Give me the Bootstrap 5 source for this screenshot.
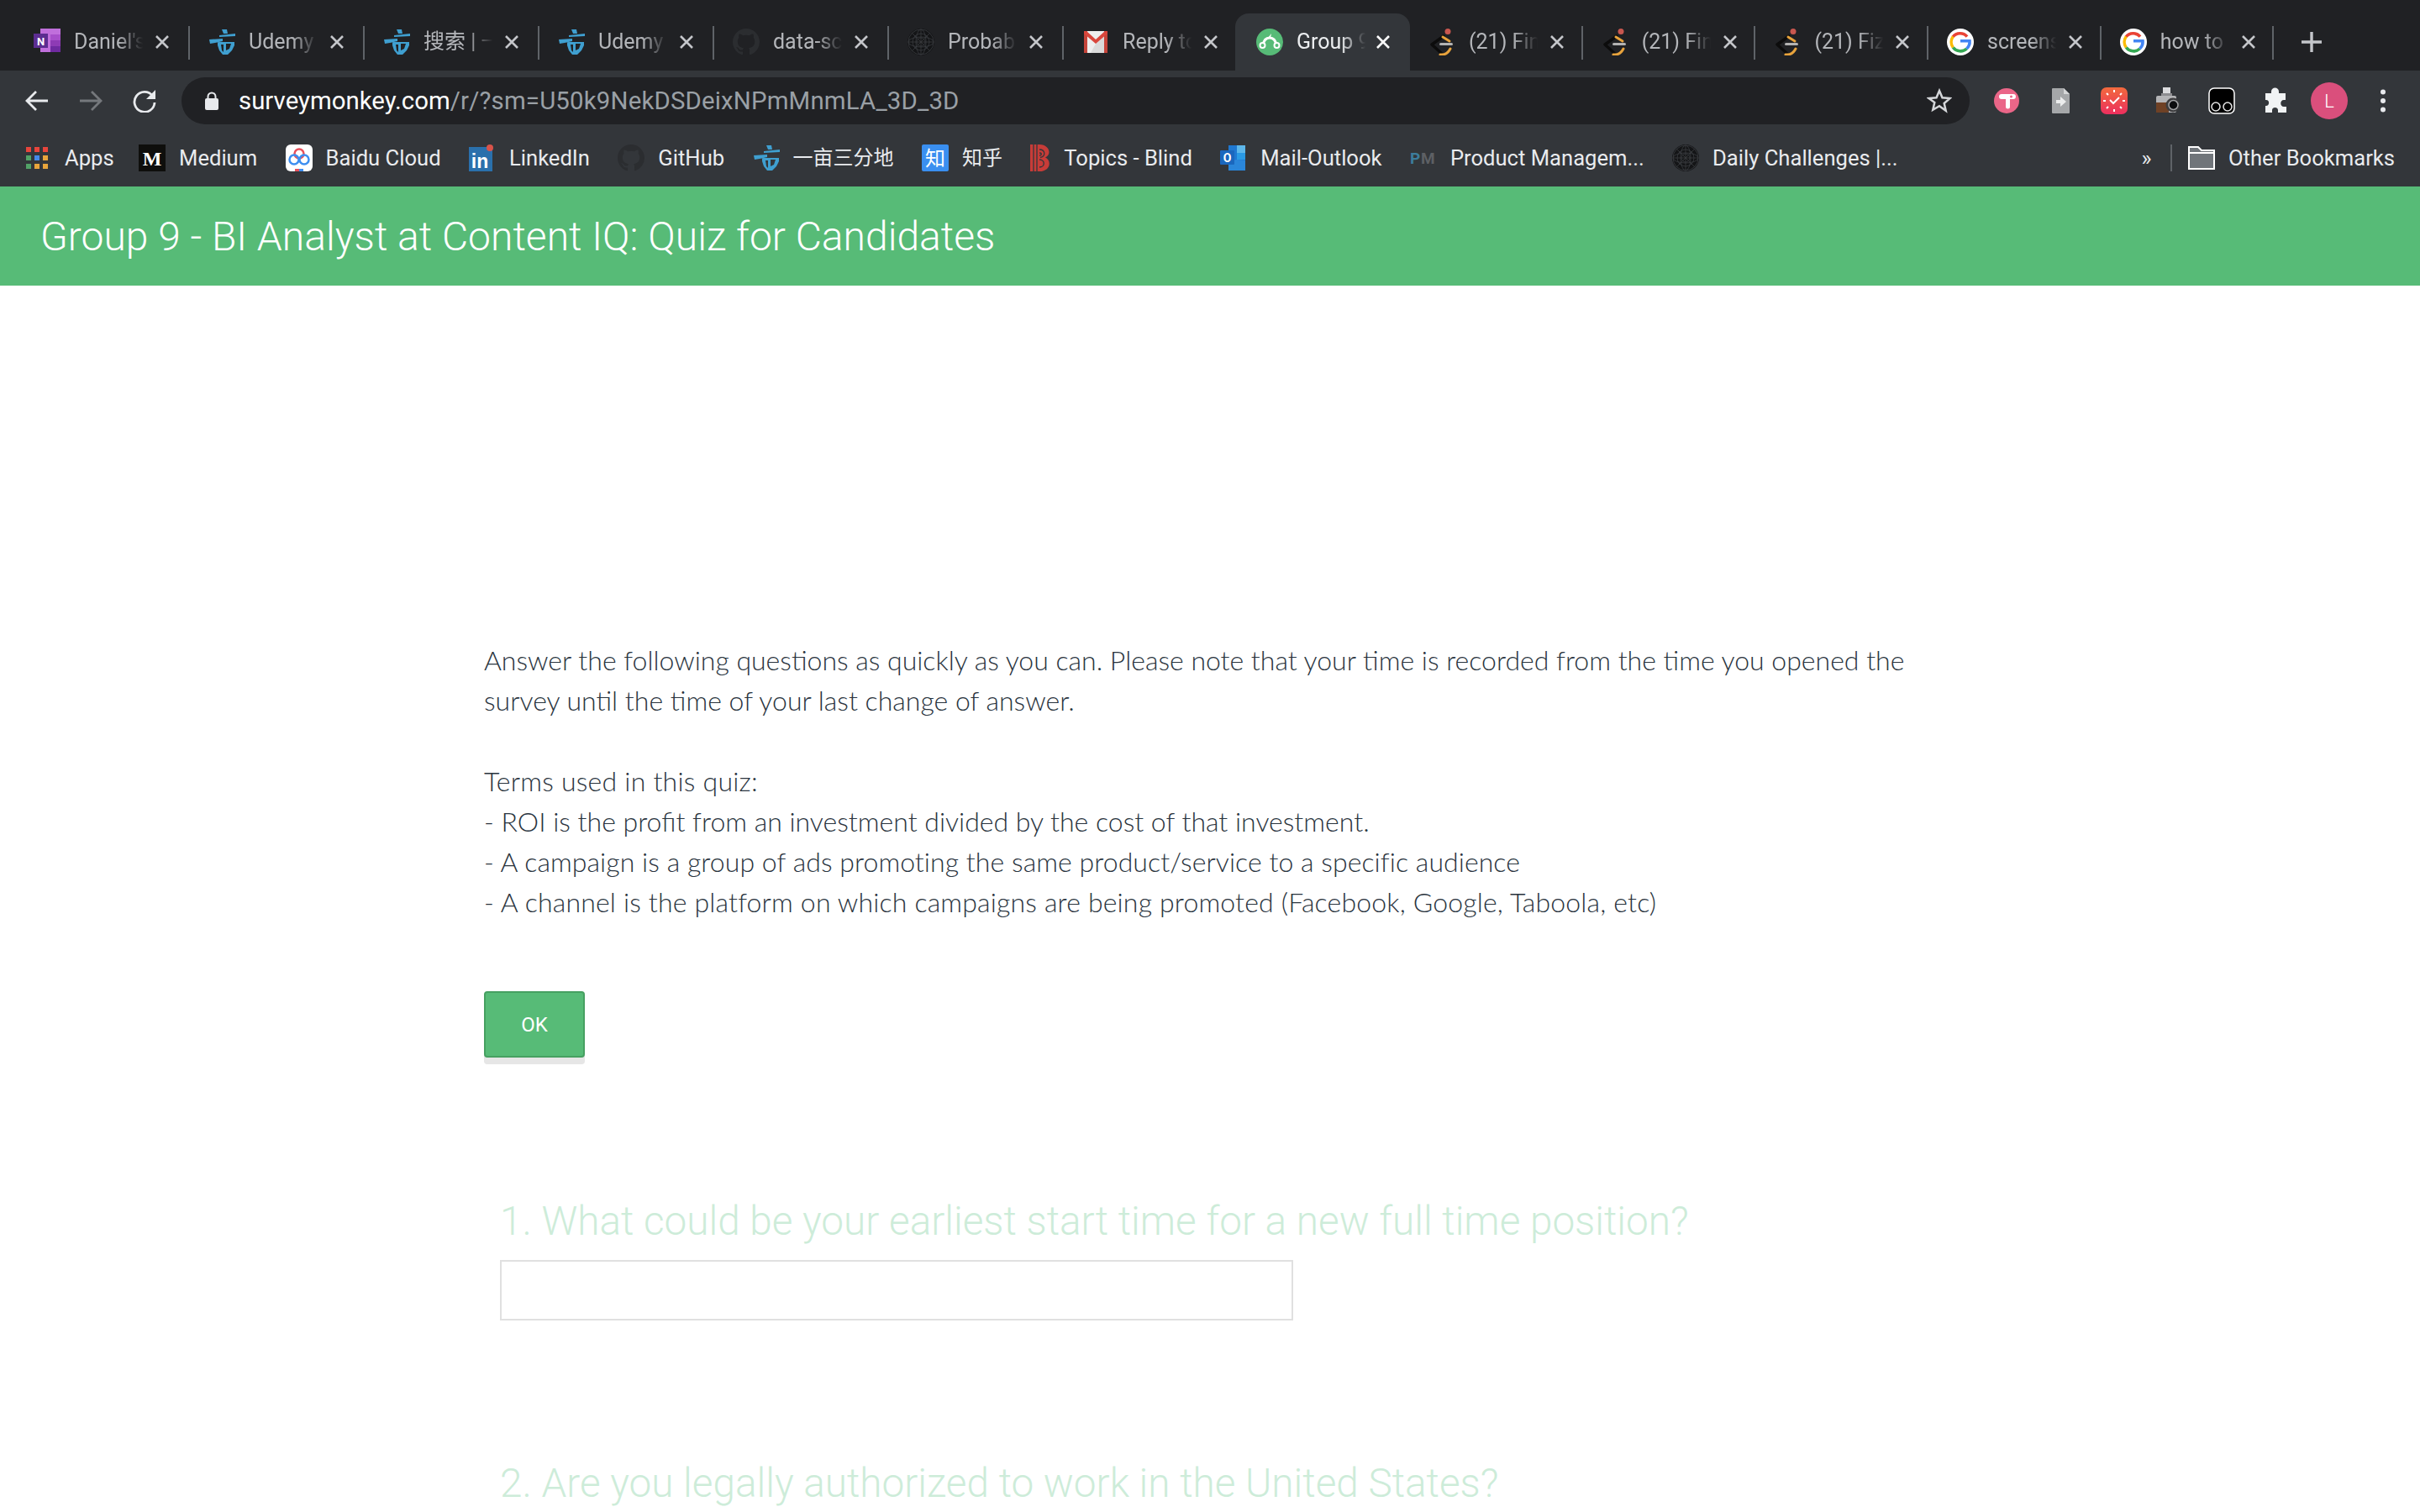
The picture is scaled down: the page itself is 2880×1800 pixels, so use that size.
<!DOCTYPE html>
<html lang="en">
<head>
<meta charset="UTF-8">
<title>Group 9 - BI Analyst at Content IQ: Quiz for Candidates</title>
<link rel="stylesheet" href="https://cdn.jsdelivr.net/npm/bootstrap@5.3.0/dist/css/bootstrap.min.css">
<style>
    body { background: #fff; height: 1800px; overflow: hidden; font-family: Roboto, "Noto Sans CJK SC", sans-serif; }
    /* browser chrome */
    .tabstrip { height: 84px; background: #202124; padding: 16px 0 0 18px; }
    .tabitem { width: 208px; height: 68px; padding-left: 22px; position: relative; color: #b4b6ba; font-size: 25px; }
    .tabitem:nth-child(n+8) { width: 205.7px; }
    .tabitem::after { content: ""; position: absolute; right: 0; top: 15px; height: 40px; width: 2px; background: #5f6368; }
    .tabitem.tab-on { background: #33363a; color: #eceef0; border-radius: 16px 16px 0 0; width: 208px; margin-left: -4px; padding-left: 25px; }
    .tabitem.tab-on::after { display: none; }
    .tabitem.tab-on .tab-x { color: #fff; margin-left: 10px; }
    .tabitem.before-on::after { display: none; }
    .fav { width: 32px; height: 32px; flex: none; }
    .tab-name { width: 84px; margin-left: 16px; white-space: nowrap; overflow: hidden; -webkit-mask-image: linear-gradient(90deg, #000 62%, transparent 98%); mask-image: linear-gradient(90deg, #000 62%, transparent 98%); }
    .tab-x { width: 18px; height: 18px; margin-left: 12px; color: #c4c6ca; flex: none; }
    .tab-plus { margin-left: 32px; width: 26px; height: 26px; color: #c4c6ca; }
    .toolbar { height: 70px; background: #33363a; padding: 8px 12px 6px 12px; }
    .tool { width: 64px; height: 56px; flex: none; color: #e8eaed; }
    .tool.off { color: #75787c; }
    .omni { background: #202124; border-radius: 28px; height: 56px; padding-left: 28px; margin: 0 12px 0 12px; }
    .url { font-size: 29.4px; color: #fff; margin-left: 24px; }
    .url span { color: #9aa0a6; letter-spacing: .17px; }
    .star-i { margin-right: 21px; }
    .avatar-l { width: 44px; height: 44px; border-radius: 50%; background: #da4f7c; color: #fff; font-size: 22px; font-weight: 300; }
    .bookbar { height: 68px; background: #33363a; padding: 0 30px 0 31px; gap: 33.4px; color: #e9ebee; font-size: 25.6px; }
    .bookmark-i { gap: 16px; white-space: nowrap; }
    .bookmark-first { margin-right: -4px; }
    .bookmark-end { margin-left: auto; gap: 22px; }
    .bookmark-last { margin-left: -14px; }
    .cjk-txt { font-size: 24px; }
    .vsep { width: 2px; height: 32px; background: #5f6368; }
    .fav-apps { width: 26px; margin-right: 4px; }
    .fav-blind { width: 24px; }
    /* survey */
    .survey-head { height: 118px; background: #57bb77; color: #fff; font-family: Roboto, sans-serif; font-weight: 300; font-size: 48px; padding: 2px 0 0 48px; }
    .survey-body { padding: 422px 0 0 576px; width: 2304px; }
    .intro-txt { font-family: Lato, sans-serif; font-weight: 300; font-size: 32px; line-height: 48px; color: #2a343e; margin: 0; }
    .ls-a { letter-spacing: .23px; }
    .ls-b { letter-spacing: .06px; }
    .ls-c { letter-spacing: .17px; }
    .ok-btn { width: 120px; height: 79px; margin-top: 82px; background: #57bb77; border: 2px solid #46a061; border-radius: 4px; box-shadow: 0 8px 0 #e6e6e6; color: #fff; font-family: Roboto, sans-serif; font-size: 24px; font-weight: 400; padding: 0; }
    .ok-btn:hover { background: #57bb77; border-color: #46a061; color: #fff; }
    .qblock { padding-left: 19px; }
    .qtitle { font-family: Roboto, sans-serif; font-weight: 300; font-size: 47.7px; line-height: 64px; color: #cdecd9; margin: 0; white-space: nowrap; }
    .q-one { margin-top: 163px; }
    .q-two { margin-top: 162px; }
    .qinput { width: 944px; height: 72px; border: 2px solid #e0e0e0; background: #fff; margin-top: 14px; border-radius: 0; }
</style>
</head>
<body>

<svg width="0" height="0" class="position-absolute">
    <defs>
        <symbol id="acres" viewBox="0 0 32 32">
            <path fill="#3f9fd0" fill-rule="evenodd" d="M16 1h6l1 5h-5zM13 8l19-2v3l-19 1zM1 13l16-1v3l-9 2-6 1zM11 16h20v4l-3 6-5 5h-6l-4-5-2-6zM15 19l1 7 2 2v-9zM21 18v8l4-2 2-6z"/>
        </symbol>
        <symbol id="octo" viewBox="0 0 16 16">
            <path fill="#2b2d30" d="M8 0C3.58 0 0 3.58 0 8c0 3.54 2.29 6.53 5.47 7.59.4.07.55-.17.55-.38 0-.19-.01-.82-.01-1.49-2.01.37-2.53-.49-2.69-.94-.09-.23-.48-.94-.82-1.13-.28-.15-.68-.52-.01-.53.63-.01 1.08.58 1.23.82.72 1.21 1.87.87 2.33.66.07-.52.28-.87.51-1.07-1.78-.2-3.64-.89-3.64-3.95 0-.87.31-1.59.82-2.15-.08-.2-.36-1.02.08-2.12 0 0 .67-.21 2.2.82.64-.18 1.32-.27 2-.27s1.36.09 2 .27c1.53-1.04 2.2-.82 2.2-.82.44 1.1.16 1.92.08 2.12.51.56.82 1.27.82 2.15 0 3.07-1.87 3.75-3.65 3.95.29.25.54.73.54 1.48 0 1.07-.01 1.93-.01 2.2 0 .21.15.46.55.38A8.01 8.01 0 0 0 16 8c0-4.42-3.58-8-8-8z"/>
        </symbol>
        <symbol id="orb" viewBox="0 0 32 32">
            <circle cx="16" cy="16" r="16" fill="#141517"/>
            <g fill="none" stroke="#3a3c40" stroke-width=".8">
                <circle cx="16" cy="16" r="15"/><circle cx="16" cy="16" r="10"/><circle cx="16" cy="16" r="5"/>
                <ellipse cx="16" cy="16" rx="15" ry="6"/><ellipse cx="16" cy="16" rx="6" ry="15"/>
                <path d="M1 16h30M16 1v30M5 5l22 22M27 5L5 27"/>
            </g>
        </symbol>
        <symbol id="fish" viewBox="0 0 32 32">
            <path d="M18 9L4 19l12 11" fill="none" stroke="#0c0c0c" stroke-width="3.400" stroke-linecap="round" stroke-linejoin="round"/>
            <path d="M17 10l8 5" fill="none" stroke="#e8a33c" stroke-width="3" stroke-linecap="round"/>
            <path d="M14 31q8 1 12-7" fill="none" stroke="#e8a33c" stroke-width="3" stroke-linecap="round"/>
            <rect x="13" y="17" width="16" height="3" rx="1.500" fill="#b3b3b3"/>
            <circle cx="23" cy="3.500" r="3.500" fill="#c8574f"/>
        </symbol>
        <symbol id="gg" viewBox="0 0 32 32">
            <circle cx="16" cy="16" r="16" fill="#fff"/>
            <path fill="none" stroke="#ea4335" stroke-width="3.6" d="M24 9.6A11 11 0 0 0 7 10"/>
            <path fill="none" stroke="#fbbc05" stroke-width="3.6" d="M7.3 9.5a11 11 0 0 0 0 13"/>
            <path fill="none" stroke="#34a853" stroke-width="3.6" d="M7.3 22.5A11 11 0 0 0 23.5 24"/>
            <path fill="none" stroke="#4285f4" stroke-width="3.6" d="M23.5 24A11 11 0 0 0 27 14.7H16"/>
        </symbol>
        <symbol id="cross" viewBox="0 0 18 18">
            <path d="M2 2l14 14M16 2L2 16" stroke="currentColor" stroke-width="2.6" fill="none"/>
        </symbol>
    </defs>
</svg>

<div class="tabstrip d-flex align-items-center">
    <div class="tabitem d-flex align-items-center">
        <svg class="fav" viewBox="0 0 32 32"><rect x="8" width="24" height="28" fill="#c06fdc"/><rect x="20" y="7" width="12" height="7" fill="#a74fca"/><rect x="20" y="14" width="12" height="7" fill="#8e3bb5"/><rect x="20" y="21" width="12" height="7" fill="#6f2aa0"/><rect y="6" width="17" height="17" fill="#5c2d91"/><text x="8.5" y="20" text-anchor="middle" font-size="13" font-weight="700" fill="#fff" font-family="Roboto">N</text></svg>
        <div class="tab-name">Daniel's</div>
        <svg class="tab-x"><use href="#cross"/></svg>
    </div>
    <div class="tabitem d-flex align-items-center"><svg class="fav"><use href="#acres"/></svg><div class="tab-name">Udemy</div><svg class="tab-x"><use href="#cross"/></svg></div>
    <div class="tabitem d-flex align-items-center"><svg class="fav"><use href="#acres"/></svg><div class="tab-name">搜索 | 一亩</div><svg class="tab-x"><use href="#cross"/></svg></div>
    <div class="tabitem d-flex align-items-center"><svg class="fav"><use href="#acres"/></svg><div class="tab-name">Udemy</div><svg class="tab-x"><use href="#cross"/></svg></div>
    <div class="tabitem d-flex align-items-center"><svg class="fav"><use href="#octo"/></svg><div class="tab-name">data-sci</div><svg class="tab-x"><use href="#cross"/></svg></div>
    <div class="tabitem d-flex align-items-center"><svg class="fav"><use href="#orb"/></svg><div class="tab-name">Probabil</div><svg class="tab-x"><use href="#cross"/></svg></div>
    <div class="tabitem before-on d-flex align-items-center">
        <svg class="fav" viewBox="0 0 32 32"><rect x="2" y="3" width="28" height="26" fill="#eee"/><path fill="#dadada" d="M16 18L30 6v23H10z"/><path fill="#c5443a" d="M2 3h4v26H2zM26 3h4v26h-4z"/><path fill="#d9463c" d="M2 3h3l11 10L27 3h3v3L16 18 2 6z"/></svg>
        <div class="tab-name">Reply to</div>
        <svg class="tab-x"><use href="#cross"/></svg>
    </div>
    <div class="tabitem tab-on d-flex align-items-center">
        <svg class="fav" viewBox="0 0 32 32"><circle cx="16" cy="16" r="16" fill="#57bb77"/><path d="M8 20c1-7 4-9 8-9s7 2 8 9" fill="none" stroke="#fff" stroke-width="3"/><path d="M14 11l4-5-1 5z" fill="#fff"/><circle cx="7.500" cy="20" r="3" fill="#57bb77" stroke="#fff" stroke-width="2"/><circle cx="24.500" cy="20" r="3" fill="#57bb77" stroke="#fff" stroke-width="2"/></svg>
        <div class="tab-name">Group 9</div>
        <svg class="tab-x"><use href="#cross"/></svg>
    </div>
    <div class="tabitem d-flex align-items-center"><svg class="fav"><use href="#fish"/></svg><div class="tab-name">(21) Find</div><svg class="tab-x"><use href="#cross"/></svg></div>
    <div class="tabitem d-flex align-items-center"><svg class="fav"><use href="#fish"/></svg><div class="tab-name">(21) Find</div><svg class="tab-x"><use href="#cross"/></svg></div>
    <div class="tabitem d-flex align-items-center"><svg class="fav"><use href="#fish"/></svg><div class="tab-name">(21) Fiz</div><svg class="tab-x"><use href="#cross"/></svg></div>
    <div class="tabitem d-flex align-items-center"><svg class="fav"><use href="#gg"/></svg><div class="tab-name">screensh</div><svg class="tab-x"><use href="#cross"/></svg></div>
    <div class="tabitem d-flex align-items-center"><svg class="fav"><use href="#gg"/></svg><div class="tab-name">how to</div><svg class="tab-x"><use href="#cross"/></svg></div>
    <svg class="tab-plus" viewBox="0 0 26 26"><path d="M13 1v24M1 13h24" stroke="currentColor" stroke-width="3.4"/></svg>
</div>

<div class="toolbar d-flex align-items-center">
    <div class="tool d-flex align-items-center justify-content-center"><svg width="28" height="26" viewBox="0 0 28 26"><path d="M27 13H3M13 2L2 13l11 11" fill="none" stroke="currentColor" stroke-width="2.800"/></svg></div>
    <div class="tool off d-flex align-items-center justify-content-center"><svg width="28" height="26" viewBox="0 0 28 26"><path d="M1 13h24M15 2l11 11-11 11" fill="none" stroke="currentColor" stroke-width="2.800"/></svg></div>
    <div class="tool d-flex align-items-center justify-content-center"><svg width="28" height="28" viewBox="0 0 28 28"><path d="M23.500 8A12 12 0 1 0 26 16" fill="none" stroke="currentColor" stroke-width="2.800"/><path d="M27 1v11H16z" fill="currentColor"/></svg></div>
    <div class="omni flex-grow-1 d-flex align-items-center">
        <svg width="16" height="22" viewBox="0 0 16 22"><path d="M3.500 9V6a4.500 4.500 0 0 1 9 0v3" fill="none" stroke="#e8eaed" stroke-width="2"/><rect y="8" width="16" height="14" rx="2" fill="#e8eaed"/></svg>
        <div class="url flex-grow-1">surveymonkey.com<span>/r/?sm=U50k9NekDSDeixNPmMnmLA_3D_3D</span></div>
        <svg class="star-i" width="30" height="30" viewBox="0 0 30 30"><path d="M15 3l3.500 8.300 9 .8-6.800 5.900 2 8.800L15 21.200 7.300 25.800l2-8.800L2.500 12.100l9-.8z" fill="none" stroke="#d5d7da" stroke-width="2.500"/></svg>
    </div>
    <div class="tool d-flex align-items-center justify-content-center">
        <svg width="30" height="30" viewBox="0 0 30 30"><circle cx="15" cy="15" r="15" fill="#ea6688"/><path d="M9 7h14a3 3 0 0 1 0 6h-4v9a2.500 2.500 0 0 1-5 0v-9H9a3 3 0 0 1 0-6z" fill="#fff"/><circle cx="20.500" cy="10" r="1.500" fill="#ea6688"/></svg>
    </div>
    <div class="tool d-flex align-items-center justify-content-center">
        <svg width="21" height="30" viewBox="0 0 21 30"><path d="M0 1a1 1 0 0 1 1-1h13l7 7v22a1 1 0 0 1-1 1H1a1 1 0 0 1-1-1z" fill="#a5a7a9"/><path d="M14 0l7 7h-7z" fill="#d6d7d8"/><path d="M5 14h5v-4l7 6-7 6v-4H5z" fill="#eceded"/></svg>
    </div>
    <div class="tool d-flex align-items-center justify-content-center">
        <svg width="32" height="32" viewBox="0 0 32 32"><defs><linearGradient id="clk" x1="0" y1="0" x2="0" y2="1"><stop offset="0" stop-color="#f26a3d"/><stop offset="1" stop-color="#ec2f5e"/></linearGradient></defs><rect width="32" height="32" rx="7" fill="url(#clk)"/><path d="M16 3v3M16 26v3M3 16h3M26 16h3M7 7l2 2M25 7l-2 2M7 25l2-2M25 25l-2-2" stroke="#fff" stroke-width="2"/><path d="M11 15l4 4 7-7" fill="none" stroke="#fff" stroke-width="2"/></svg>
    </div>
    <div class="tool d-flex align-items-center justify-content-center">
        <svg width="30" height="32" viewBox="0 0 30 32"><path d="M9 0h9v7H9z" fill="#dcdcde"/><path d="M7 7h13v4H7z" fill="#8d8d90"/><rect x="1" y="10" width="24" height="20" rx="2" fill="#b4b4b6"/><rect x="1" y="18" width="15" height="12" fill="#6f4125"/><circle cx="21" cy="21" r="8.500" fill="#3c3c3e"/><circle cx="21.500" cy="21" r="5.500" fill="#0d0d0f" stroke="#a3a3a5" stroke-width="1.500"/></svg>
    </div>
    <div class="tool d-flex align-items-center justify-content-center">
        <svg width="32" height="32" viewBox="0 0 32 32"><rect x="1" y="1" width="30" height="30" rx="6" fill="#000" stroke="#fff" stroke-width="1.500"/><circle cx="9" cy="23" r="5" fill="none" stroke="#e8e8e8" stroke-width="1.500"/><circle cx="23" cy="23" r="5" fill="none" stroke="#e8e8e8" stroke-width="1.500"/></svg>
    </div>
    <div class="tool d-flex align-items-center justify-content-center">
        <svg width="30" height="32" viewBox="0 0 30 32"><path d="M10 5c0-6 9-6 9 0v2h8v8h-2c-5 0-5 8 0 8h3v7H18v-3c0-4-7-4-7 0v3H3v-8c5 1 6-8 0-7V7h7z" fill="#f1f3f4"/></svg>
    </div>
    <div class="tool d-flex align-items-center justify-content-center">
        <div class="avatar-l d-flex align-items-center justify-content-center">L</div>
    </div>
    <div class="tool d-flex align-items-center justify-content-center">
        <svg width="8" height="28" viewBox="0 0 8 28"><circle cx="4" cy="3.500" r="3" fill="#e8eaed"/><circle cx="4" cy="14" r="3" fill="#e8eaed"/><circle cx="4" cy="24.500" r="3" fill="#e8eaed"/></svg>
    </div>
</div>

<div class="bookbar d-flex align-items-center">
    <div class="bookmark-i bookmark-first d-flex align-items-center">
        <svg class="fav fav-apps" viewBox="0 0 26 26"><path fill="#e8453c" d="M0 0h6v6H0zM10 0h6v6h-6zM20 0h6v6h-6z"/><path fill="#52a267" d="M0 10h6v6H0z"/><path fill="#4689e8" d="M10 10h6v6h-6z"/><path fill="#e8a53c" d="M20 10h6v6h-6zM10 20h6v6h-6zM20 20h6v6h-6z"/><path fill="#52a267" d="M0 20h6v6H0z"/></svg>
        <span>Apps</span>
    </div>
    <div class="bookmark-i d-flex align-items-center">
        <svg class="fav" viewBox="0 0 32 32"><rect width="32" height="32" fill="#0e0e0c"/><text x="16" y="25" text-anchor="middle" font-size="24" font-weight="700" fill="#fff" font-family="Liberation Serif">M</text></svg>
        <span>Medium</span>
    </div>
    <div class="bookmark-i d-flex align-items-center">
        <svg class="fav" viewBox="0 0 32 32"><rect width="32" height="32" rx="6" fill="#fff"/><circle cx="16" cy="11" r="5.500" fill="none" stroke="#e8505b" stroke-width="2.500"/><circle cx="10" cy="18" r="5.500" fill="none" stroke="#3d8ef0" stroke-width="2.500"/><circle cx="22" cy="18" r="5.500" fill="none" stroke="#3d8ef0" stroke-width="2.500"/><rect x="11" y="29" width="5" height="3" fill="#e8505b"/><rect x="16" y="29" width="5" height="3" fill="#3d8ef0"/></svg>
        <span>Baidu Cloud</span>
    </div>
    <div class="bookmark-i d-flex align-items-center">
        <svg class="fav" viewBox="0 0 32 32"><rect y="3" width="28" height="29" fill="#2a70ac"/><text x="13" y="28" text-anchor="middle" font-size="23" font-weight="700" fill="#fff" font-family="Liberation Sans">in</text><circle cx="25" cy="4" r="4" fill="#d9534a"/></svg>
        <span>LinkedIn</span>
    </div>
    <div class="bookmark-i d-flex align-items-center"><svg class="fav"><use href="#octo"/></svg><span>GitHub</span></div>
    <div class="bookmark-i d-flex align-items-center"><svg class="fav"><use href="#acres"/></svg><span class="cjk-txt">一亩三分地</span></div>
    <div class="bookmark-i d-flex align-items-center">
        <svg class="fav" viewBox="0 0 32 32"><rect width="32" height="32" rx="2" fill="#3a8ff0"/><text x="16" y="25" text-anchor="middle" font-size="24" fill="#fff" font-family="Noto Sans CJK SC">知</text></svg>
        <span class="cjk-txt">知乎</span>
    </div>
    <div class="bookmark-i d-flex align-items-center">
        <svg class="fav fav-blind" viewBox="0 0 24 32"><path fill="#c73c38" d="M0 0h11c12 0 15 12 7 15.500 8 3.500 6 16.500-7 16.500H0z"/><path d="M4 0v32M8 0v32M11 6c7 0 8 8 1 9.500M11 18c7 0 7 9 0 9M11 10c3 0 3 3 0 3" fill="none" stroke="#33363a" stroke-width="1.300"/></svg>
        <span>Topics - Blind</span>
    </div>
    <div class="bookmark-i d-flex align-items-center">
        <svg class="fav" viewBox="0 0 32 32"><rect x="10" y="1" width="20" height="29" fill="#1f78d1"/><rect x="20" y="1" width="10" height="9" fill="#5db7ea"/><rect x="20" y="10" width="10" height="8" fill="#2a9ae4"/><path fill="#2a86da" d="M10 20l10-2 10 1v12H10z"/><rect y="7" width="17" height="17" rx="1" fill="#1a67be"/><text x="8.500" y="21" text-anchor="middle" font-size="14" font-weight="700" fill="#fff" font-family="Roboto">O</text></svg>
        <span>Mail-Outlook</span>
    </div>
    <div class="bookmark-i d-flex align-items-center">
        <svg class="fav" viewBox="0 0 32 32"><text x="0" y="23" font-size="19" font-weight="700" fill="#3c7d9c" font-family="Roboto">P</text><text x="13" y="23" font-size="19" font-weight="700" fill="#5d6064" font-family="Roboto">M</text></svg>
        <span>Product Managem...</span>
    </div>
    <div class="bookmark-i d-flex align-items-center"><svg class="fav"><use href="#orb"/></svg><span>Daily Challenges |...</span></div>
    <div class="bookmark-end d-flex align-items-center">
        <span>»</span>
        <div class="vsep"></div>
    </div>
    <div class="bookmark-i bookmark-last d-flex align-items-center">
        <svg class="fav" viewBox="0 0 32 32"><path d="M1 3h11l4 4h15v22H1z" fill="#70757a" stroke="#fff" stroke-width="2"/><path d="M1 10h30" stroke="#fff" stroke-width="2"/></svg>
        <span>Other Bookmarks</span>
    </div>
</div>

<header class="survey-head d-flex align-items-center">Group 9 - BI Analyst at Content IQ: Quiz for Candidates</header>

<main class="survey-body">
    <p class="intro-txt">Answer the following questions as quickly as you can. Please note that your time is recorded from the time you opened the<br>survey until the time of your last change of answer.<br><br><span class="ls-a">Terms used in this quiz:</span><br>- ROI is the profit from an investment divided by the cost of that investment.<br><span class="ls-b">- A campaign is a group of ads promoting the same product/service to a specific audience</span><br><span class="ls-c">- A channel is the platform on which campaigns are being promoted (Facebook, Google, Taboola, etc)</span></p>
    <button type="button" class="btn ok-btn d-block">OK</button>
    <div class="qblock q-one">
        <h2 class="qtitle">1. What could be your earliest start time for a new full time position?</h2>
        <input type="text" class="qinput d-block" aria-label="Answer">
    </div>
    <div class="qblock q-two">
        <h2 class="qtitle">2. Are you legally authorized to work in the United States?</h2>
    </div>
</main>

<script src="https://cdn.jsdelivr.net/npm/bootstrap@5.3.0/dist/js/bootstrap.bundle.min.js"></script>
</body>
</html>
